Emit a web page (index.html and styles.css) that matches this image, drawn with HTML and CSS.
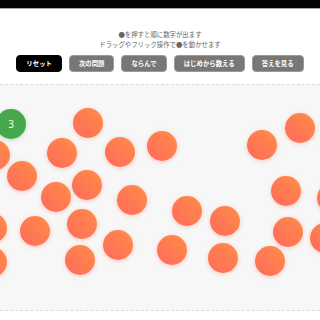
FILE: index.html
```html
<!DOCTYPE html>
<html>
<head>
<meta charset="utf-8">
<title>ならんで</title>
<link rel="stylesheet" href="styles.css">

<script>

    var balls = [
        [88,108],[-5,140],[62,138],[120,137],[162,131],[262,130],[300,113],
        [22,161],[87,170],[56,182],[132,185],[286,176],[332,183],[187,196],
        [225,206],[82,209],[-8,213],[35,216],[118,230],[80,245],[-8,247],
        [172,235],[223,243],[270,246],[288,217],[325,223]
    ];

    var opened = [[11,109,3]];

function draw(){

    var str = "";

    for(var i=0;i<balls.length;i++){
        str += `<div class="ball" style="left:${balls[i][0]-15}px;top:${balls[i][1]-100}px;"></div>`;
    }

    for(var j=0;j<opened.length;j++){
        str += `<div class="ball done" style="left:${opened[j][0]-15}px;top:${opened[j][1]-100}px;">${opened[j][2]}</div>`;
    }

    document.querySelector(".board").innerHTML = str;
}

</script>
</head>

<body onload="draw();">

    <div class="topbar"></div>

    <div class="info">
        <p>●を押すと順に数字が出ます</p>
        <p>ドラッグやフリック操作で●を動かせます</p>
    </div>

    <div class="button-container">
        <button class="btn reset">リセット</button>
        <button class="btn">次の問題</button>
        <button class="btn">ならんで</button>
        <button class="btn">はじめから数える</button>
        <button class="btn">答えを見る</button>
    </div>

    <div class="board"></div>

</body>
</html>
```

FILE: styles.css
```css
body{

    margin: 0;
    background: #fff;
    font-family: "Noto Sans CJK JP", "Noto Sans", sans-serif;
}

.topbar{

    height: 8px;
    background: #050505;
    border-bottom: 1px solid #aaa;
}

.info{

    margin-top: 21px;
    text-align: center;
    color: #666;
    font-size: 6.4px;
    line-height: 10px;
}

.info p{

    margin: 0;
}

.button-container{

    display: flex;
    justify-content: center;
    gap: 7px;
    margin-top: 5px;
}

.btn{

    height: 17px;
    padding: 0 9px;
    border: 1px solid #9a9a9a;
    border-radius: 4px;
    background: #777;
    color: #fff;
    font-family: inherit;
    font-size: 6.4px;
    font-weight: bold;
}

.reset{

    background: #000;
    border-color: #000;
    padding: 0 9px;
}

.board{

    position: relative;
    margin-top: 12px;
    height: 225px;
    background: #f7f7f7;
    border-top: 1px dashed #ddd;
    border-bottom: 1px dashed #ddd;
    overflow: hidden;
}

.ball{

    position: absolute;
    width: 30px;
    height: 30px;
    margin-top: 15px;
    border-radius: 50%;
    background: linear-gradient(225deg, #ff8d47, #ff6a5c);
    box-shadow: 0 1px 4px rgba(255, 110, 90, 0.35);
}

.done{

    background: #46a84a;
    box-shadow: 0 1px 4px rgba(70, 168, 74, 0.35);
    color: #fff;
    font-size: 10px;
    font-family: "Open Sans", sans-serif;
    line-height: 30px;
    text-align: center;
}
```
